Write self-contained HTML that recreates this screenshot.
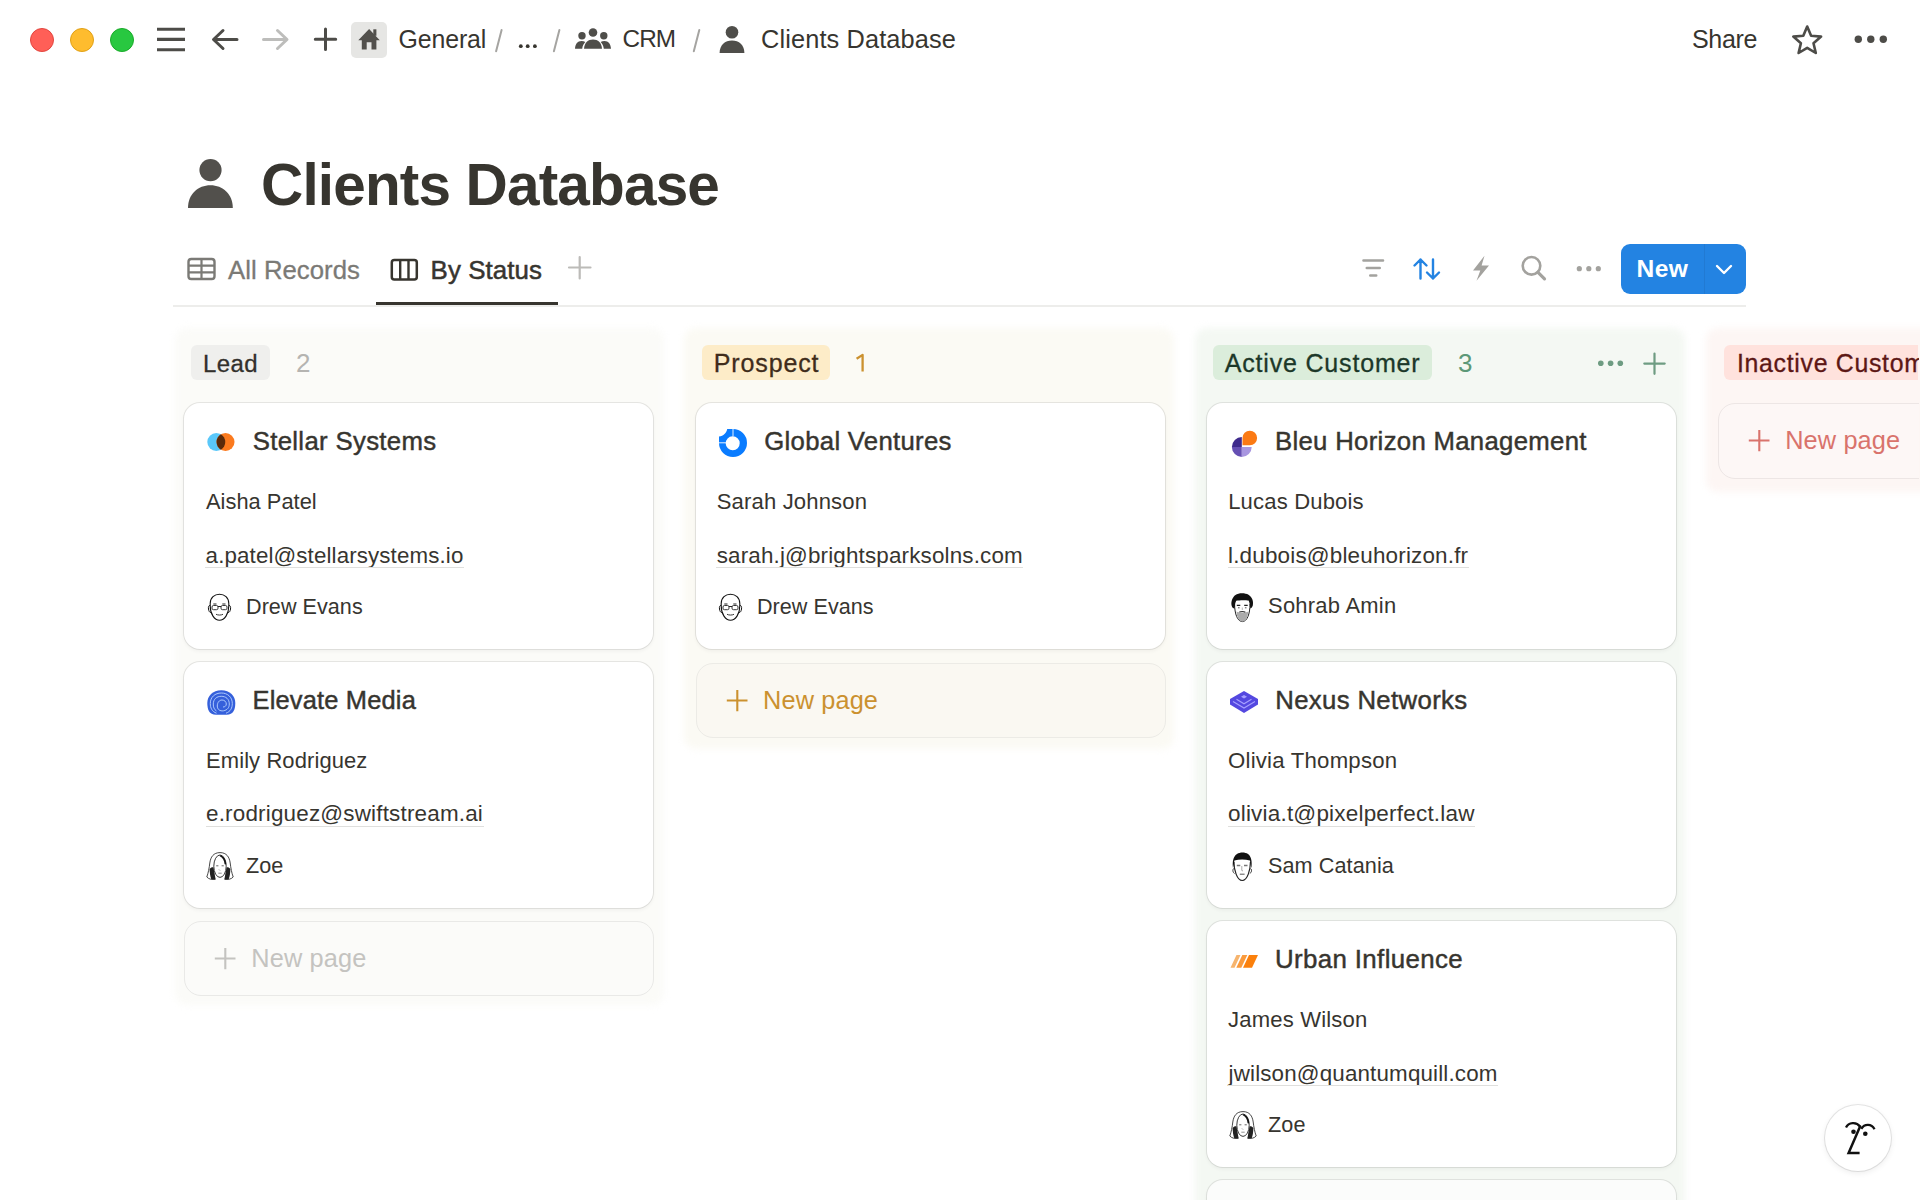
<!DOCTYPE html>
<html><head><meta charset="utf-8"><title>Clients Database</title><style>
*{margin:0;padding:0;box-sizing:border-box}
html,body{width:1920px;height:1200px;overflow:hidden;background:#fff}
body{position:relative;font-family:"Liberation Sans",sans-serif;-webkit-font-smoothing:antialiased}
.t{position:absolute;white-space:nowrap}
.ic{position:absolute;overflow:visible}
.box{position:absolute}
.dot{position:absolute;width:24px;height:24px;border-radius:50%}
.colbg{border-radius:12px;filter:blur(3.5px)}
.card{position:absolute;background:#fff;border-radius:16px;box-shadow:0 0 0 1px rgba(15,15,15,.085),0 2px 4px rgba(15,15,15,.05)}
.np{position:absolute;border-radius:17px;border:1.2px solid #ebebea}
.clip{position:absolute;left:0;top:0;width:1918.5px;height:1200px;overflow:hidden}
.help{position:absolute;border-radius:50%;background:#fff;box-shadow:0 0 0 1px rgba(15,15,15,.1),0 2px 6px rgba(15,15,15,.08)}
</style></head>
<body>
<div class="dot" style="left:30px;top:28px;background:#ff5f57;border:0.5px solid #e2463f"></div>
<div class="dot" style="left:70px;top:28px;background:#febc2e;border:0.5px solid #e1a116"></div>
<div class="dot" style="left:110px;top:28px;background:#28c840;border:0.5px solid #1aab29"></div>
<svg class="ic" style="left:150px;top:20px" width="40" height="40" viewBox="150 20 40 40"><path d="M157 29.2H185M157 39.4H185M157 49.7H185" stroke="#4d4c48" stroke-width="3.1" fill="none"/></svg>
<svg class="ic" style="left:205px;top:20px" width="40" height="40" viewBox="205 20 40 40"><path d="M237 39.5H214M223 30.5L213.5 39.5L223 48.5" stroke="#4d4c48" stroke-width="3" fill="none" stroke-linecap="round" stroke-linejoin="round"/></svg>
<svg class="ic" style="left:255px;top:20px" width="40" height="40" viewBox="255 20 40 40"><path d="M263.5 39.5H286.5M277.5 30.5L287 39.5L277.5 48.5" stroke="#bdbdbb" stroke-width="3" fill="none" stroke-linecap="round" stroke-linejoin="round"/></svg>
<svg class="ic" style="left:305px;top:20px" width="40" height="40" viewBox="305 20 40 40"><path d="M325.5 29V49.5M315.3 39.3H335.7" stroke="#4d4c48" stroke-width="3" fill="none" stroke-linecap="round"/></svg>
<div class="box" style="left:351px;top:22px;width:36px;height:36px;border-radius:5px;background:#e6e6e4"></div>
<svg class="ic" style="left:351px;top:22px" width="36" height="36" viewBox="351 22 36 36"><path d="M369.1 29L379.8 40.2H376.4V49.5H371.5V42.2H366.7V49.5H361.8V40.2H358.3Z" fill="#52504c"/><rect x="373.3" y="29.3" width="3.1" height="6.5" fill="#52504c"/></svg>
<div class="t" style="left:398.60px;top:27.22px;font-size:24.90px;line-height:24.90px;letter-spacing:-0.141px;color:#37352f;font-weight:400;">General</div>
<svg class="ic" style="left:490px;top:25px" width="16" height="30" viewBox="490 25 16 30"><path d="M501.6 30L496.1 51.3" stroke="#a5a4a1" stroke-width="2" stroke-linecap="round"/></svg>
<svg class="ic" style="left:515px;top:40px" width="26" height="12" viewBox="515 40 26 12"><circle cx="520.8" cy="46.2" r="1.9" fill="#37352f"/><circle cx="527.7" cy="46.2" r="1.9" fill="#37352f"/><circle cx="534.9" cy="46.2" r="1.9" fill="#37352f"/></svg>
<svg class="ic" style="left:548px;top:25px" width="16" height="30" viewBox="548 25 16 30"><path d="M559.4 30L553.9 51.3" stroke="#a5a4a1" stroke-width="2" stroke-linecap="round"/></svg>
<svg class="ic" style="left:570px;top:22px" width="46" height="32" viewBox="570 22 46 32"><circle cx="593" cy="32.5" r="4.3" fill="#4f4e4a"/><circle cx="582" cy="35.8" r="3.7" fill="#4f4e4a"/><circle cx="603.8" cy="35.8" r="3.7" fill="#4f4e4a"/><path d="M584 48.8C584.5 42.5 588 39.5 593 39.5C598 39.5 601.5 42.5 602 48.8Z" fill="#4f4e4a"/><path d="M575 48.8C575.3 44 577.5 41 581.5 41C583 41 584.3 41.4 585.3 42C583.6 43.8 582.5 46 582.2 48.8Z" fill="#4f4e4a"/><path d="M611 48.8C610.7 44 608.5 41 604.5 41C603 41 601.7 41.4 600.7 42C602.4 43.8 603.5 46 603.8 48.8Z" fill="#4f4e4a"/></svg>
<div class="t" style="left:622.50px;top:27.41px;font-size:24.33px;line-height:24.33px;letter-spacing:-0.923px;color:#37352f;font-weight:400;">CRM</div>
<svg class="ic" style="left:688px;top:25px" width="16" height="30" viewBox="688 25 16 30"><path d="M699.3 30L693.8 51.3" stroke="#a5a4a1" stroke-width="2" stroke-linecap="round"/></svg>
<svg class="ic" style="left:715px;top:22px" width="34" height="34" viewBox="715 22 34 34"><circle cx="732" cy="32.3" r="6.3" fill="#4f4e4a"/><path d="M719.6 53C719.6 45 725 40.5 732 40.5C739 40.5 744.4 45 744.4 53Z" fill="#4f4e4a"/></svg>
<div class="t" style="left:761.00px;top:26.52px;font-size:25.37px;line-height:25.37px;letter-spacing:0.119px;color:#37352f;font-weight:400;">Clients Database</div>
<div class="t" style="left:1692.00px;top:27.10px;font-size:25.05px;line-height:25.05px;letter-spacing:-0.343px;color:#37352f;font-weight:400;">Share</div>
<svg class="ic" style="left:1785px;top:18px" width="44" height="44" viewBox="1785 18 44 44"><path d="M1807.2 26.5L1811.1 35.8L1821.1 36.6L1813.5 43.2L1815.8 53L1807.2 47.8L1798.6 53L1800.9 43.2L1793.3 36.6L1803.3 35.8Z" fill="none" stroke="#4d4c48" stroke-width="2.6" stroke-linejoin="round"/></svg>
<svg class="ic" style="left:1850px;top:28px" width="44" height="24" viewBox="1850 28 44 24"><circle cx="1858.3" cy="39.2" r="3.7" fill="#4d4c48"/><circle cx="1870.8" cy="39.2" r="3.7" fill="#4d4c48"/><circle cx="1883.3" cy="39.2" r="3.7" fill="#4d4c48"/></svg>
<svg class="ic" style="left:180px;top:150px" width="64" height="64" viewBox="180 150 64 64"><circle cx="210.5" cy="170.1" r="11.1" fill="#52504c"/><path d="M188 207.9C188 194 198 185.2 210.4 185.2C222.8 185.2 232.8 194 232.8 207.9Z" fill="#52504c"/></svg>
<div class="t" style="left:261.00px;top:156.48px;font-size:58.50px;line-height:58.50px;letter-spacing:-0.835px;color:#37352f;font-weight:700;">Clients Database</div>
<svg class="ic" style="left:185px;top:255px" width="34" height="28" viewBox="185 255 34 28"><rect x="188.5" y="259" width="26" height="20" rx="2.8" fill="none" stroke="#7b7a76" stroke-width="2.4"/><path d="M188.5 265.6H214.5M188.5 272.3H214.5M201.5 259V279" stroke="#7b7a76" stroke-width="2.2"/></svg>
<div class="t" style="left:228.00px;top:258.20px;font-size:25.75px;line-height:25.75px;letter-spacing:0.028px;color:#7b7a76;font-weight:400;-webkit-text-stroke:0.3px #7b7a76;">All Records</div>
<svg class="ic" style="left:388px;top:255px" width="34" height="30" viewBox="388 255 34 30"><rect x="391.8" y="260" width="25" height="19.5" rx="2.5" fill="none" stroke="#37352f" stroke-width="2.5"/><path d="M400.2 260V279.5M408.5 260V279.5" stroke="#37352f" stroke-width="2.4"/></svg>
<div class="t" style="left:430.60px;top:258.11px;font-size:25.86px;line-height:25.86px;letter-spacing:0.088px;color:#37352f;font-weight:400;-webkit-text-stroke:0.5px #37352f;">By Status</div>
<svg class="ic" style="left:565px;top:253px" width="30" height="30" viewBox="565 253 30 30"><path d="M579.7 257V278.5M569 267.5H590.5" stroke="#bcbbb8" stroke-width="2.2" stroke-linecap="round"/></svg>
<div class="box" style="left:376px;top:302px;width:182px;height:3px;background:#37352f"></div>
<div class="box" style="left:173px;top:305px;width:1573px;height:2px;background:#ededeb"></div>
<svg class="ic" style="left:1355px;top:250px" width="36" height="36" viewBox="1355 250 36 36"><path d="M1363.5 260.5H1383M1366.8 268H1379.7M1370.3 275.5H1376.2" stroke="#a3a29e" stroke-width="2.6" stroke-linecap="round"/></svg>
<svg class="ic" style="left:1408px;top:250px" width="38" height="36" viewBox="1408 250 38 36"><path d="M1420.5 278.5V259.5M1414.5 265.5L1420.5 259.5L1426.5 265.5M1433 259.5V278.5M1427 272.5L1433 278.5L1439 272.5" stroke="#2383e2" stroke-width="2.4" fill="none" stroke-linecap="round" stroke-linejoin="round"/></svg>
<svg class="ic" style="left:1466px;top:250px" width="30" height="36" viewBox="1466 250 30 36"><path d="M1484.5 255.8L1473 270.5H1480.3L1476.5 280.8L1489 265.5H1481.6Z" fill="#a3a29e"/></svg>
<svg class="ic" style="left:1515px;top:250px" width="38" height="36" viewBox="1515 250 38 36"><circle cx="1531.5" cy="265.8" r="8.8" fill="none" stroke="#a3a29e" stroke-width="2.6"/><path d="M1538 272.3L1544.5 278.8" stroke="#a3a29e" stroke-width="3.2" stroke-linecap="round"/></svg>
<svg class="ic" style="left:1570px;top:258px" width="38" height="22" viewBox="1570 258 38 22"><circle cx="1579.3" cy="268.7" r="2.6" fill="#a3a29e"/><circle cx="1588.8" cy="268.7" r="2.6" fill="#a3a29e"/><circle cx="1598.3" cy="268.7" r="2.6" fill="#a3a29e"/></svg>
<div class="box" style="left:1621px;top:244px;width:125px;height:49.5px;border-radius:9px;background:#2383e2"></div>
<div class="box" style="left:1703.5px;top:244px;width:1.5px;height:49.5px;background:#1f74c9;opacity:.6"></div>
<div class="t" style="left:1636.50px;top:256.89px;font-size:24.58px;line-height:24.58px;letter-spacing:0.432px;color:#ffffff;font-weight:700;">New</div>
<svg class="ic" style="left:1710px;top:258px" width="28" height="24" viewBox="1710 258 28 24"><path d="M1717 266L1724 273L1731 266" stroke="#ffffff" stroke-width="2.4" fill="none" stroke-linecap="round" stroke-linejoin="round"/></svg>
<div class="box colbg" style="left:174.5px;top:328px;width:489.5px;height:677px;background:#fbfbf8"></div>
<div class="box colbg" style="left:684.0px;top:328px;width:489.5px;height:421px;background:#fbfaf4"></div>
<div class="box colbg" style="left:1195.0px;top:328px;width:489.5px;height:972px;background:#f4f8f3"></div>
<div class="box colbg" style="left:1706.0px;top:328px;width:489.5px;height:164px;background:#fdf6f4"></div>
<div class="box" style="left:191px;top:345.2px;width:79.0px;height:35px;border-radius:6px;background:#efefed"></div>
<div class="t" style="left:203.00px;top:351.70px;font-size:23.98px;line-height:23.98px;letter-spacing:0.382px;color:#32302c;font-weight:400;-webkit-text-stroke:0.3px #32302c;">Lead</div>
<div class="t" style="left:296.00px;top:349.99px;font-size:26.00px;line-height:26.00px;letter-spacing:0.000px;color:#b5b4b1;font-weight:400;">2</div>
<div class="box" style="left:702px;top:345.2px;width:128.3px;height:35px;border-radius:6px;background:#fdecc8"></div>
<div class="t" style="left:713.70px;top:350.81px;font-size:25.03px;line-height:25.03px;letter-spacing:0.881px;color:#402c1b;font-weight:400;-webkit-text-stroke:0.3px #402c1b;">Prospect</div>
<svg class="ic" style="left:850px;top:350px" width="20" height="26" viewBox="850 350 20 26"><path d="M856.6 358.8L862.6 354.9V371.6" fill="none" stroke="#cb912f" stroke-width="2.3" stroke-linejoin="round"/></svg>
<div class="box" style="left:1213.1px;top:345.2px;width:218.8px;height:35px;border-radius:6px;background:#dbeddb"></div>
<div class="t" style="left:1224.70px;top:350.82px;font-size:25.02px;line-height:25.02px;letter-spacing:0.818px;color:#1c3829;font-weight:400;-webkit-text-stroke:0.3px #1c3829;">Active Customer</div>
<div class="t" style="left:1458.00px;top:349.99px;font-size:26.00px;line-height:26.00px;letter-spacing:0.000px;color:#5c9877;font-weight:400;">3</div>
<div class="clip">
<div class="box" style="left:1724.4px;top:345.2px;width:194.1px;height:35px;border-radius:6px 0 0 6px;background:#ffe2dd"></div>
<div class="t" style="left:1737.00px;top:350.94px;font-size:24.87px;line-height:24.87px;letter-spacing:0.687px;color:#5d1715;font-weight:400;-webkit-text-stroke:0.3px #5d1715;">Inactive Customer</div>
</div>
<svg class="ic" style="left:1590px;top:350px" width="80" height="28" viewBox="1590 350 80 28"><circle cx="1600.8" cy="363.3" r="2.8" fill="#6e9c82"/><circle cx="1610.6" cy="363.3" r="2.8" fill="#6e9c82"/><circle cx="1620.3" cy="363.3" r="2.8" fill="#6e9c82"/><path d="M1654.5 353.5V373.8M1644.3 363.6H1664.7" stroke="#6e9c82" stroke-width="2.2" stroke-linecap="round"/></svg>
<div class="card" style="left:184.3px;top:403px;width:469px;height:246px"></div>
<svg class="ic" style="left:207.2px;top:432.2px" width="30" height="22" viewBox="0 0 30 22"><circle cx="9.3" cy="10" r="9" fill="#5ac8fa"/><circle cx="18.5" cy="10" r="9" fill="#fb7a1e"/><path d="M13.9 2.3A9 9 0 0 1 13.9 17.7A9 9 0 0 1 13.9 2.3Z" fill="#5a2a0a"/></svg>
<div class="t" style="left:252.70px;top:428.87px;font-size:25.78px;line-height:25.78px;letter-spacing:0.320px;color:#37352f;font-weight:400;-webkit-text-stroke:0.45px #37352f;">Stellar Systems</div>
<div class="t" style="left:206.00px;top:491.02px;font-size:21.83px;line-height:21.83px;letter-spacing:0.023px;color:#37352f;font-weight:400;">Aisha Patel</div>
<div class="t" style="left:205.60px;top:544.60px;font-size:22.33px;line-height:22.33px;letter-spacing:0.125px;color:#37352f;font-weight:400;">a.patel@stellarsystems.io</div>
<div class="box" style="left:205.1px;top:566.5px;width:258.8px;height:1.2px;background:#dfdfdd"></div>
<svg class="ic" style="left:206.5px;top:593px" width="26" height="30" viewBox="0 0 26 30"><path d="M3.2 10.5C3.2 4.5 7.5 1.2 12.5 1.2C17.5 1.2 21.8 4.5 21.8 10.5V13C21.8 21 17.5 27.3 12.5 27.3C7.5 27.3 3.2 21 3.2 13Z" fill="#fff" stroke="#111" stroke-width="1.1"/><path d="M3.2 12.5C1.5 12.3 1.2 14 1.5 16C1.8 18 2.5 19.5 3.8 19.5M21.8 12.5C23.5 12.3 23.8 14 23.5 16C23.2 18 22.5 19.5 21.2 19.5" fill="none" stroke="#111" stroke-width="1"/><rect x="5" y="12.5" width="6" height="4.2" rx="1.5" fill="none" stroke="#222" stroke-width="0.9"/><rect x="14" y="12.5" width="6" height="4.2" rx="1.5" fill="none" stroke="#222" stroke-width="0.9"/><path d="M11 13.5H14M6.3 11H9.5M15.3 11H18.5" stroke="#222" stroke-width="1"/><path d="M9 21.3C11 22.3 14 22.3 16 21.3" fill="none" stroke="#222" stroke-width="0.9"/></svg>
<div class="t" style="left:246.00px;top:595.73px;font-size:21.58px;line-height:21.58px;letter-spacing:0.043px;color:#37352f;font-weight:400;">Drew Evans</div>
<div class="card" style="left:184.3px;top:662px;width:469px;height:246px"></div>
<svg class="ic" style="left:206.8px;top:689px" width="30" height="28" viewBox="0 0 30 28"><path d="M14.3 1.2C23 1.2 28.3 7 28.3 14C28.3 20.5 26.5 25.7 19.5 25.7H9C2 25.7 0.3 20.5 0.3 14C0.3 7 5.6 1.2 14.3 1.2Z" fill="#3560db"/><path d="M9.5 24.2C5 22.5 3.3 19 3.3 14.5C3.3 8 8 4 14.3 4C20.5 4 25.3 8 25.3 14.5C25.3 19 23.5 22.5 19 24.2" fill="none" stroke="#b9d4ff" stroke-width="0.9"/><path d="M9.5 22C7 20.5 6.3 18 6.3 15C6.3 10 9.8 7.3 14.3 7.3C18.8 7.3 22.3 10 22.3 15C22.3 18.5 20.5 21 16.5 21.8C13 22.3 10.3 20.5 10.3 17C10.3 13.5 12.3 11 15 11C17.5 11 19.3 12.8 19.3 15C19.3 17 17.8 18 16 18" fill="none" stroke="#b9d4ff" stroke-width="0.9"/></svg>
<div class="t" style="left:252.50px;top:688.14px;font-size:25.46px;line-height:25.46px;letter-spacing:0.171px;color:#37352f;font-weight:400;-webkit-text-stroke:0.45px #37352f;">Elevate Media</div>
<div class="t" style="left:206.00px;top:749.89px;font-size:21.98px;line-height:21.98px;letter-spacing:0.099px;color:#37352f;font-weight:400;">Emily Rodriguez</div>
<div class="t" style="left:206.00px;top:803.49px;font-size:22.45px;line-height:22.45px;letter-spacing:0.187px;color:#37352f;font-weight:400;">e.rodriguez@swiftstream.ai</div>
<div class="box" style="left:205.5px;top:825.5px;width:278.0px;height:1.2px;background:#dfdfdd"></div>
<svg class="ic" style="left:206.8px;top:852px" width="28" height="30" viewBox="0 0 28 30"><path d="M13 0.6C6.5 0.6 3.6 5 2.8 11C2.2 16 1.3 21 -0.2 25C2 27.5 5.5 27.8 8.5 27.2M13 0.6C19.5 0.6 22.4 5 23.2 11C23.8 16 24.7 21 26.2 25C24 27.5 20.5 27.8 17.5 27.2" fill="none" stroke="#333" stroke-width="0.9"/><path d="M2.6 17C3.8 15.5 5.3 15 6.5 15.5L8.6 27.3C7 27.7 5.3 27.6 4.2 27.1C3.2 24 2.7 20.5 2.6 17Z" fill="#222"/><path d="M23.4 17C22.2 15.5 20.7 15 19.5 15.5L17.4 27.3C19 27.7 20.7 27.6 21.8 27.1C22.8 24 23.3 20.5 23.4 17Z" fill="#222"/><ellipse cx="13" cy="14.2" rx="6.2" ry="11.2" fill="#fff" stroke="#222" stroke-width="0.9"/><path d="M12.8 3.2C16.8 3.6 19 7.5 19.3 12.5L17.6 12.3C17.2 8.5 15.6 5.5 12.8 4.3Z" fill="#111"/><path d="M9.2 13.8H11.4M14.6 13.8H16.8" stroke="#555" stroke-width="0.9"/><path d="M12 17.5L13 18.5M11.3 21.2H14.7" stroke="#777" stroke-width="0.8"/></svg>
<div class="t" style="left:245.90px;top:854.70px;font-size:21.62px;line-height:21.62px;letter-spacing:0.100px;color:#37352f;font-weight:400;">Zoe</div>
<div class="card" style="left:696.0px;top:403px;width:469px;height:246px"></div>
<svg class="ic" style="left:718.1px;top:427.5px" width="30" height="30" viewBox="0 0 30 30"><path fill-rule="evenodd" fill="#0a7cff" d="M15 1A14 14 0 1 1 1 15V8.5C5.5 8 8.5 5 9.2 1ZM14.5 8.3A7 7 0 1 0 21.7 15.2A7 7 0 0 0 14.5 8.3Z"/><path d="M15 1V8.3M1 14.8H8" stroke="#fff" stroke-width="0.9"/></svg>
<div class="t" style="left:764.30px;top:428.93px;font-size:25.72px;line-height:25.72px;letter-spacing:0.294px;color:#37352f;font-weight:400;-webkit-text-stroke:0.45px #37352f;">Global Ventures</div>
<div class="t" style="left:716.70px;top:490.82px;font-size:22.07px;line-height:22.07px;letter-spacing:0.157px;color:#37352f;font-weight:400;">Sarah Johnson</div>
<div class="t" style="left:716.70px;top:544.54px;font-size:22.40px;line-height:22.40px;letter-spacing:0.168px;color:#37352f;font-weight:400;">sarah.j@brightsparksolns.com</div>
<div class="box" style="left:716.2px;top:566.5px;width:307.2px;height:1.2px;background:#dfdfdd"></div>
<svg class="ic" style="left:718.2px;top:593px" width="26" height="30" viewBox="0 0 26 30"><path d="M3.2 10.5C3.2 4.5 7.5 1.2 12.5 1.2C17.5 1.2 21.8 4.5 21.8 10.5V13C21.8 21 17.5 27.3 12.5 27.3C7.5 27.3 3.2 21 3.2 13Z" fill="#fff" stroke="#111" stroke-width="1.1"/><path d="M3.2 12.5C1.5 12.3 1.2 14 1.5 16C1.8 18 2.5 19.5 3.8 19.5M21.8 12.5C23.5 12.3 23.8 14 23.5 16C23.2 18 22.5 19.5 21.2 19.5" fill="none" stroke="#111" stroke-width="1"/><rect x="5" y="12.5" width="6" height="4.2" rx="1.5" fill="none" stroke="#222" stroke-width="0.9"/><rect x="14" y="12.5" width="6" height="4.2" rx="1.5" fill="none" stroke="#222" stroke-width="0.9"/><path d="M11 13.5H14M6.3 11H9.5M15.3 11H18.5" stroke="#222" stroke-width="1"/><path d="M9 21.3C11 22.3 14 22.3 16 21.3" fill="none" stroke="#222" stroke-width="0.9"/></svg>
<div class="t" style="left:757.00px;top:595.74px;font-size:21.57px;line-height:21.57px;letter-spacing:0.037px;color:#37352f;font-weight:400;">Drew Evans</div>
<div class="card" style="left:1207.3px;top:403px;width:469px;height:246px"></div>
<svg class="ic" style="left:1229.5px;top:428.5px" width="30" height="30" viewBox="0 0 30 30"><path d="M19.8 1.7A7.3 7.3 0 1 1 19.8 16.3H12.5V9A7.3 7.3 0 0 1 19.8 1.7Z" fill="#fb7a14"/><path d="M11.8 8.1A9.9 9.9 0 0 0 1.9 18H11.8Z" fill="#3e2a8c"/><path d="M1.9 18A9.9 9.9 0 0 0 11.8 27.9V18Z" fill="#654fb3"/><path d="M11.8 27.9A9.9 9.9 0 0 0 21.7 18H11.8Z" fill="#a896e0"/></svg>
<div class="t" style="left:1275.00px;top:428.92px;font-size:25.73px;line-height:25.73px;letter-spacing:0.317px;color:#37352f;font-weight:400;-webkit-text-stroke:0.45px #37352f;">Bleu Horizon Management</div>
<div class="t" style="left:1228.20px;top:490.81px;font-size:22.07px;line-height:22.07px;letter-spacing:0.158px;color:#37352f;font-weight:400;">Lucas Dubois</div>
<div class="t" style="left:1228.00px;top:544.50px;font-size:22.45px;line-height:22.45px;letter-spacing:0.183px;color:#37352f;font-weight:400;">l.dubois@bleuhorizon.fr</div>
<div class="box" style="left:1227.5px;top:566.5px;width:241.2px;height:1.2px;background:#dfdfdd"></div>
<svg class="ic" style="left:1229.8px;top:593px" width="26" height="30" viewBox="0 0 26 30"><path d="M4.6 11C4.6 21 7.5 28.6 12.3 28.6C17.1 28.6 20 21 20 11" fill="#fff" stroke="#222" stroke-width="1"/><path d="M6.5 18.5C7 25.5 9.5 28.6 12.3 28.6C15.1 28.6 17.6 25.5 18.2 18.5C16.5 19.8 8.5 19.8 6.5 18.5Z" fill="#ababab"/><path d="M9.3 19.2C10.5 18.2 14 18.2 15.3 19.2" fill="none" stroke="#333" stroke-width="1.1"/><path d="M1.6 12.5C0.8 8.5 2.5 4 5.5 2C8.5 -0.2 15 -0.3 18.5 1.8C22 4 23.8 8 22.8 12.5C22.3 14 21.5 15 20.3 15.5C20 12 19.5 9.5 18.6 7.5C15.5 7 9 7 6.2 7.8C5.3 9.5 4.8 12 4.6 15.5C3 15.5 2 14.5 1.6 12.5Z" fill="#111"/><path d="M6.8 12.3H10.3M14.2 12.3H17.7" stroke="#222" stroke-width="1.2"/><path d="M8 14.8H9.6M14.9 14.8H16.5" stroke="#444" stroke-width="0.9"/><path d="M12.3 14.5V17" stroke="#999" stroke-width="0.7"/></svg>
<div class="t" style="left:1268.00px;top:595.42px;font-size:21.95px;line-height:21.95px;letter-spacing:0.253px;color:#37352f;font-weight:400;">Sohrab Amin</div>
<div class="card" style="left:1207.3px;top:662px;width:469px;height:246px"></div>
<svg class="ic" style="left:1230px;top:690px" width="30" height="26" viewBox="0 0 30 26"><path d="M14 1L28 9V14.5L14 23L0 14.5V9Z" fill="#5448e0"/><path d="M3 11.5L14 18L25 11.5" fill="none" stroke="#a7a0ff" stroke-width="1.1"/><path d="M6.5 9.2L14 13.8L21.5 9.2" fill="none" stroke="#a7a0ff" stroke-width="1.1"/><path d="M11 6.7L14 5L17 6.7L14 8.4Z" fill="#a7a0ff"/></svg>
<div class="t" style="left:1275.20px;top:687.89px;font-size:25.76px;line-height:25.76px;letter-spacing:0.349px;color:#37352f;font-weight:400;-webkit-text-stroke:0.45px #37352f;">Nexus Networks</div>
<div class="t" style="left:1228.00px;top:749.71px;font-size:22.20px;line-height:22.20px;letter-spacing:0.219px;color:#37352f;font-weight:400;">Olivia Thompson</div>
<div class="t" style="left:1228.00px;top:803.45px;font-size:22.51px;line-height:22.51px;letter-spacing:0.198px;color:#37352f;font-weight:400;">olivia.t@pixelperfect.law</div>
<div class="box" style="left:1227.5px;top:825.5px;width:247.6px;height:1.2px;background:#dfdfdd"></div>
<svg class="ic" style="left:1229.8px;top:852px" width="26" height="30" viewBox="0 0 26 30"><path d="M4 10C4 18 7 28.5 12.2 28.5C17.4 28.5 20.4 18 20.4 10" fill="#fff" stroke="#222" stroke-width="1.1"/><path d="M4 16.5C2.5 16.5 2.3 20.5 4.6 21.5M20.4 16.5C21.9 16.5 22.1 20.5 19.8 21.5" fill="none" stroke="#333" stroke-width="0.9"/><path d="M3 16C2.3 10 3 4.5 7 2C10 0 15 0 18 2C21.5 4.5 22.2 10 21.4 16C20.6 14 20.4 11 20 8.5C15 7.3 9 7.3 4.4 8.5C4 11 3.8 14 3 16Z" fill="#111"/><path d="M6.8 13.5H10.3M14 13.5H17.5" stroke="#777" stroke-width="1.7"/><path d="M11.8 14V18.5L13 19" fill="none" stroke="#888" stroke-width="0.7"/><path d="M9.8 22.2H14.6" stroke="#666" stroke-width="1.1"/></svg>
<div class="t" style="left:1268.00px;top:854.68px;font-size:21.64px;line-height:21.64px;letter-spacing:0.079px;color:#37352f;font-weight:400;">Sam Catania</div>
<div class="card" style="left:1207.3px;top:921px;width:469px;height:246px"></div>
<svg class="ic" style="left:1229.7px;top:954px" width="30" height="16" viewBox="0 0 30 16"><path d="M6.5 1H10.5L4.5 13.7H0.5Z" fill="#f6b46e"/><path d="M12.3 1H17.3L11.3 13.7H6.3Z" fill="#fa9a3c"/><path d="M19 1H28L22 13.7H13Z" fill="#fb800c"/></svg>
<div class="t" style="left:1275.00px;top:946.81px;font-size:25.86px;line-height:25.86px;letter-spacing:0.365px;color:#37352f;font-weight:400;-webkit-text-stroke:0.45px #37352f;">Urban Influence</div>
<div class="t" style="left:1228.00px;top:1008.80px;font-size:22.09px;line-height:22.09px;letter-spacing:0.171px;color:#37352f;font-weight:400;">James Wilson</div>
<div class="t" style="left:1228.56px;top:1062.56px;font-size:22.38px;line-height:22.38px;letter-spacing:0.160px;color:#37352f;font-weight:400;">jwilson@quantumquill.com</div>
<div class="box" style="left:1227.5px;top:1084.5px;width:270.5px;height:1.2px;background:#dfdfdd"></div>
<svg class="ic" style="left:1229.8px;top:1111px" width="28" height="30" viewBox="0 0 28 30"><path d="M13 0.6C6.5 0.6 3.6 5 2.8 11C2.2 16 1.3 21 -0.2 25C2 27.5 5.5 27.8 8.5 27.2M13 0.6C19.5 0.6 22.4 5 23.2 11C23.8 16 24.7 21 26.2 25C24 27.5 20.5 27.8 17.5 27.2" fill="none" stroke="#333" stroke-width="0.9"/><path d="M2.6 17C3.8 15.5 5.3 15 6.5 15.5L8.6 27.3C7 27.7 5.3 27.6 4.2 27.1C3.2 24 2.7 20.5 2.6 17Z" fill="#222"/><path d="M23.4 17C22.2 15.5 20.7 15 19.5 15.5L17.4 27.3C19 27.7 20.7 27.6 21.8 27.1C22.8 24 23.3 20.5 23.4 17Z" fill="#222"/><ellipse cx="13" cy="14.2" rx="6.2" ry="11.2" fill="#fff" stroke="#222" stroke-width="0.9"/><path d="M12.8 3.2C16.8 3.6 19 7.5 19.3 12.5L17.6 12.3C17.2 8.5 15.6 5.5 12.8 4.3Z" fill="#111"/><path d="M9.2 13.8H11.4M14.6 13.8H16.8" stroke="#555" stroke-width="0.9"/><path d="M12 17.5L13 18.5M11.3 21.2H14.7" stroke="#777" stroke-width="0.8"/></svg>
<div class="t" style="left:1268.00px;top:1113.70px;font-size:21.62px;line-height:21.62px;letter-spacing:0.100px;color:#37352f;font-weight:400;">Zoe</div>
<div class="card" style="left:1207.3px;top:1180px;width:469px;height:246px;background:#fbfcfb"></div>
<div class="np" style="left:184.3px;top:920.6px;width:470px;height:75.5px;background:#fbfbf9;border-color:#e9e9e7"></div>
<svg class="ic" style="left:209.3px;top:940.6px" width="32" height="34" viewBox="0 0 32 34"><path d="M16.3 7V28.3M5.8 17.5H26.5" stroke="#c4c3c0" stroke-width="2.1"/></svg>
<div class="t" style="left:251.30px;top:945.76px;font-size:25.33px;line-height:25.33px;letter-spacing:0.125px;color:#c4c3c0;font-weight:400;">New page</div>
<div class="np" style="left:696.0px;top:662.5px;width:470px;height:75.5px;background:#faf8f2;border-color:#ecebe6"></div>
<svg class="ic" style="left:721.0px;top:682.5px" width="32" height="34" viewBox="0 0 32 34"><path d="M16.3 7V28.3M5.8 17.5H26.5" stroke="#cb912f" stroke-width="2.1"/></svg>
<div class="t" style="left:763.00px;top:687.66px;font-size:25.33px;line-height:25.33px;letter-spacing:0.125px;color:#cb912f;font-weight:400;">New page</div>
<div class="clip">
<div class="np" style="left:1718.2px;top:403px;width:470px;height:75.5px;background:#fdf7f6;border-color:#ede6e5"></div>
<svg class="ic" style="left:1743.2px;top:423px" width="32" height="34" viewBox="0 0 32 34"><path d="M16.3 7V28.3M5.8 17.5H26.5" stroke="#d9736c" stroke-width="2.1"/></svg>
<div class="t" style="left:1785.20px;top:428.16px;font-size:25.33px;line-height:25.33px;letter-spacing:0.125px;color:#d9736c;font-weight:400;">New page</div>
</div>
<div class="help" style="left:1825px;top:1105px;width:66px;height:66px"></div>
<svg class="ic" style="left:1825px;top:1105px" width="66" height="66" viewBox="1825 1105 66 66"><path d="M1846 1127.5C1848.5 1122 1856.5 1121.5 1860 1126.5M1861.3 1128.8C1864.5 1123.5 1871.5 1123.5 1874.5 1129.2" fill="none" stroke="#111" stroke-width="2.3"/><path d="M1860.5 1125.5L1848.6 1153H1859.6" fill="none" stroke="#111" stroke-width="2.5"/><circle cx="1853.5" cy="1131.8" r="2.3" fill="#111"/><circle cx="1865.3" cy="1133.8" r="2.3" fill="#111"/></svg>
</body></html>
